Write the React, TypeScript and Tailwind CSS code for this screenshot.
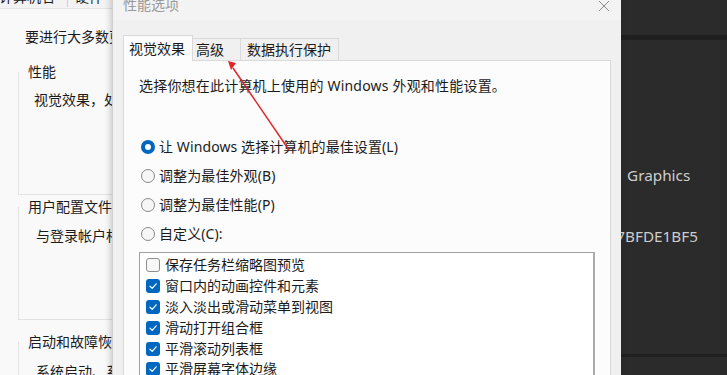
import React from 'react';

const font = "font-['Segoe_UI','Noto_Sans','Noto_Sans_CJK_SC',sans-serif]";

const options = [
  { label: '让 Windows 选择计算机的最佳设置(L)', checked: true },
  { label: '调整为最佳外观(B)', checked: false },
  { label: '调整为最佳性能(P)', checked: false },
  { label: '自定义(C):', checked: false },
];

const effects = [
  { label: '保存任务栏缩略图预览', on: false },
  { label: '窗口内的动画控件和元素', on: true },
  { label: '淡入淡出或滑动菜单到视图', on: true },
  { label: '滑动打开组合框', on: true },
  { label: '平滑滚动列表框', on: true },
  { label: '平滑屏幕字体边缘', on: true },
  { label: '启用 Peek', on: true },
  { label: '任务栏中的动画', on: true },
];

const Radio: React.FC<{ checked: boolean }> = ({ checked }) =>
  checked ? (
    <span className="w-[14px] h-[14px] rounded-full bg-[#0067c0] flex items-center justify-center shrink-0">
      <span className="w-[6px] h-[6px] rounded-full bg-white" />
    </span>
  ) : (
    <span className="w-[14px] h-[14px] rounded-full border border-[#8a8a8a] bg-[#f6f6f6] shrink-0" />
  );

const Check: React.FC<{ on: boolean }> = ({ on }) =>
  on ? (
    <span className="w-[14px] h-[14px] rounded-[3px] bg-[#0067c0] flex items-center justify-center shrink-0">
      <svg width="10" height="10" viewBox="0 0 10 10" fill="none">
        <path d="M2 5.2 L4.2 7.3 L8.2 2.8" stroke="white" strokeWidth="1.2" strokeLinecap="round" strokeLinejoin="round" />
      </svg>
    </span>
  ) : (
    <span className="w-[14px] h-[14px] rounded-[3px] border border-[#8d8d8d] bg-[#f8f8f8] shrink-0" />
  );

const SystemProperties: React.FC = () => (
  <div className="absolute left-0 top-[-15px] w-[330px] h-[400px] bg-[#f9f9f9] text-[14px] text-[#1b1b1b] whitespace-nowrap">
    <div className="flex h-[24px] items-center ml-[-8px] border-b border-[#e3e3e3] bg-[#f3f3f3]">
      <span className="px-[7px] w-[76px] border-r border-[#d0d0d0] leading-[20px]">计算机名</span>
      <span className="px-[7px] leading-[20px]">硬件</span>
      <span className="px-[7px] leading-[20px]">高级</span>
    </div>
    <div className="pl-[25px] pt-[18px] leading-[20px]">要进行大多数更改，你必须作为管理员登录。</div>
    <div className="ml-[18px] mt-[25px] h-[123px] border-l border-b border-[#e2e2e2] relative">
      <span className="absolute left-[8px] top-[-10px] leading-[20px] bg-[#f9f9f9] px-[1px]">性能</span>
      <div className="pl-[15px] pt-[18px] leading-[20px]">视觉效果，处理器计划，内存使用，以及虚拟内存</div>
    </div>
    <div className="ml-[18px] mt-[12px] h-[113px] border-l border-b border-[#e2e2e2] relative">
      <span className="absolute left-[8px] top-[-10px] leading-[20px] bg-[#f9f9f9] px-[1px]">用户配置文件</span>
      <div className="pl-[17px] pt-[19px] leading-[20px]">与登录帐户相关的桌面设置</div>
    </div>
    <div className="ml-[18px] mt-[22px] h-[80px] border-l border-[#e2e2e2] relative">
      <span className="absolute left-[8px] top-[-10px] leading-[20px] bg-[#f9f9f9] px-[1px]">启动和故障恢复</span>
      <div className="pl-[17px] pt-[20px] leading-[20px]">系统启动、系统故障和调试信息</div>
    </div>
  </div>
);

const PerformanceOptions: React.FC = () => (
  <div className="absolute left-[112px] top-[-10px] w-[509px] h-[400px] bg-[#f0f0f0] shadow-[-2px_0_6px_rgba(0,0,0,0.18)] border-l border-[#cfcfcf] text-[14px] text-[#1b1b1b] whitespace-nowrap">
    <div className="h-[30px] flex items-center justify-between bg-[#f3f3f3] pl-[10px] pr-[11px]">
      <span className="text-[#9a9a9a] leading-[20px]">性能选项</span>
      <svg width="12" height="12" viewBox="0 0 12 12" className="mt-[1px]">
        <path d="M1 1 L11 11 M11 1 L1 11" stroke="#8c8c8c" strokeWidth="1" />
      </svg>
    </div>
    <div className="mt-[15px] ml-[10px] w-[488px]">
      <div className="flex items-end h-[25px]">
        <div className="relative z-10 mb-[-1px] h-[26px] w-[70px] bg-[#fcfcfc] border border-b-0 border-[#d9d9d9] flex items-center pl-[5px] leading-[20px]">视觉效果</div>
        <div className="h-[22px] w-[48px] bg-[#f0f0f0] border-t border-r border-[#d9d9d9] flex items-center pl-[3px] leading-[20px]">高级</div>
        <div className="h-[22px] w-[98px] bg-[#f0f0f0] border-t border-r border-[#d9d9d9] flex items-center pl-[6px] leading-[20px]">数据执行保护</div>
      </div>
      <div className="h-[340px] bg-[#fcfcfc] border border-[#d9d9d9] pl-[15px] pt-[15px]">
        <div className="leading-[20px] tracking-[0.2px]">选择你想在此计算机上使用的 Windows 外观和性能设置。</div>
        <div className="mt-[36px] flex flex-col">
          {options.map((o) => (
            <div key={o.label} className="h-[29px] flex items-center gap-[4px] pl-[2px] leading-[20px]">
              <Radio checked={o.checked} />
              <span className="tracking-[0.1px]">{o.label}</span>
            </div>
          ))}
        </div>
        <div className="mt-[4px] w-[456px] h-[200px] bg-white border border-[#a0a0a0] border-r-2 border-r-[#ababab] pt-[2px] pl-[6px] overflow-hidden">
          {effects.map((e) => (
            <div key={e.label} className="h-[20.8px] flex items-center gap-[5px] leading-[20px]">
              <Check on={e.on} />
              <span>{e.label}</span>
            </div>
          ))}
        </div>
      </div>
    </div>
  </div>
);

export default function App() {
  return (
    <div className={`relative w-[727px] h-[375px] overflow-hidden bg-[#2b2b2b] ${font}`}>
      <div className="absolute left-0 right-0 top-[35px] h-[5px] bg-[#1f1f1f]" />
      <div className="absolute left-0 right-0 top-[354px] h-[3px] bg-[#1f1f1f]" />
      <div className="absolute left-[627px] top-[163px] text-[15.3px] leading-[24px] text-[#cdcdcd] font-['Noto_Sans',sans-serif]">Graphics</div>
      <div className="absolute right-[29px] top-[224px] text-[15.3px] leading-[24px] text-[#cdcdcd] font-['Noto_Sans',sans-serif]">A3C9-7BFDE1BF5</div>
      <SystemProperties />
      <PerformanceOptions />
      <svg className="absolute left-0 top-0" width="727" height="375" viewBox="0 0 727 375">
        <line x1="289" y1="150" x2="233" y2="68" stroke="#e0282a" strokeWidth="1.5" />
        <polygon points="228,61 236,63 231,70" fill="#e0282a" />
      </svg>
    </div>
  );
}
